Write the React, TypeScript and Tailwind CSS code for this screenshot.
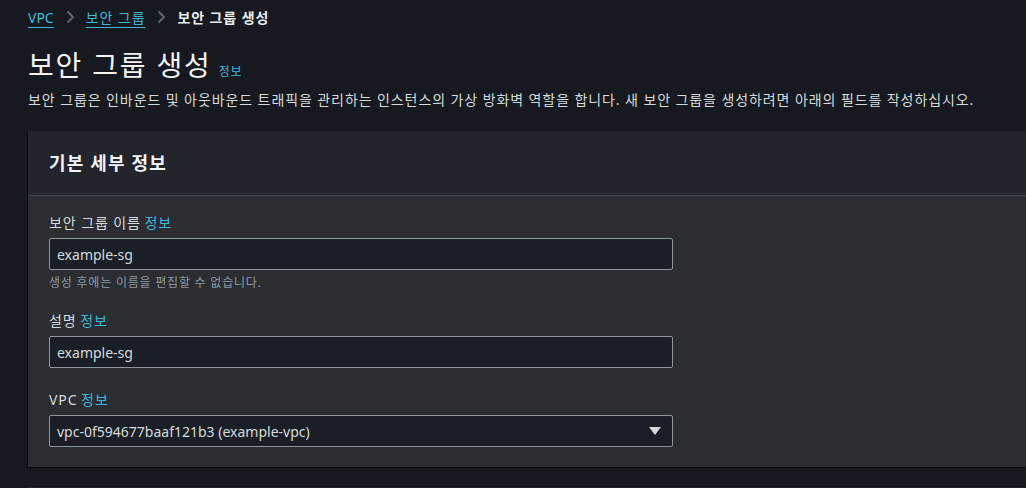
import React from 'react';

const FONT = { fontFamily: '"Noto Sans", "Noto Sans CJK KR", sans-serif' };

// korean glyphs in the reference render a little wider
const ko = 'tracking-[0.065em]';

const Info = ({ className = '' }: { className?: string }) => (
  <span className={`text-[#42b8d8] ${ko} ${className}`}>정보</span>
);

const Chevron = () => (
  <svg width="16" height="16" viewBox="0 0 16 16" className="mx-2 text-[#5f6670]">
    <path d="M5.5 2.5 L11 8 L5.5 13.5" fill="none" stroke="currentColor" strokeWidth="2" />
  </svg>
);

const Field = ({ label, value, hint, select, className = '' }: { label: string; value: string; hint?: string; select?: boolean; className?: string }) => (
  <div className={`flex flex-col ${className}`}>
    <label className="text-[14px] leading-[22px] text-[#d5dbdb]">
      <span className={ko}>{label}</span> <Info />
    </label>
    <div className="mt-[4px] w-[624px] h-[32px] flex items-center justify-between pl-[7px] pr-[8px] bg-[#1a1f27] border border-[#8d989c] rounded-[2px] text-[14px] text-[#d5dbdb]">
      <span>{value}</span>
      {select && (
        <svg width="12" height="10" viewBox="0 0 12 10" className="mr-[3px]">
          <path d="M0 1 L12 1 L6 9 Z" fill="#d5dbdb" />
        </svg>
      )}
    </div>
    {hint && <p className={`mt-[5px] text-[12px] leading-[16px] text-[#8d99a8] ${ko}`}>{hint}</p>}
  </div>
);

export default function App() {
  return (
    <div className="min-h-screen bg-[#161920] text-[#d5dbdb] overflow-hidden pl-[28px]" style={FONT}>
      <nav className="flex items-center h-[34px] text-[14px]">
        <a className="text-[#42b8d8] underline underline-offset-[4px]">VPC</a>
        <Chevron />
        <a className={`text-[#42b8d8] underline underline-offset-[4px] ${ko}`}>보안 그룹</a>
        <Chevron />
        <span className={`font-bold text-[#e9ebed] ${ko}`}>보안 그룹 생성</span>
      </nav>
      <div className="flex items-end mt-[13px]">
        <h1 className={`text-[28px] leading-[36px] text-[#f2f3f3] ${ko}`}>보안 그룹 생성</h1>
        <Info className="ml-[7px] mb-[2px] text-[12px]" />
      </div>
      <p className={`mt-[6px] text-[14px] leading-[22px] text-[#d5dbdb] whitespace-nowrap ${ko}`}>
        보안 그룹은 인바운드 및 아웃바운드 트래픽을 관리하는 인스턴스의 가상 방화벽 역할을 합니다. 새 보안 그룹을 생성하려면 아래의 필드를 작성하십시오.
      </p>
      <section className="mt-[20px] bg-[#2a2d32] shadow-[-1px_1px_1px_rgba(0,0,0,0.5)]">
        <div className="h-[65px] flex items-center px-[21px] bg-[#22252c] border-b border-[#414750]">
          <h2 className={`text-[18px] font-bold text-[#f2f3f3] ${ko}`}>기본 세부 정보</h2>
        </div>
        <div className="flex flex-col px-[21px] pt-[16px] pb-[20px]">
          <Field label="보안 그룹 이름" value="example-sg" hint="생성 후에는 이름을 편집할 수 없습니다." />
          <Field className="mt-[19px]" label="설명" value="example-sg" />
          <Field className="mt-[21px]" label="VPC" value="vpc-0f594677baaf121b3 (example-vpc)" select />
        </div>
      </section>
      <section className="mt-[20px] h-[40px] bg-[#22252c]" />
    </div>
  );
}
